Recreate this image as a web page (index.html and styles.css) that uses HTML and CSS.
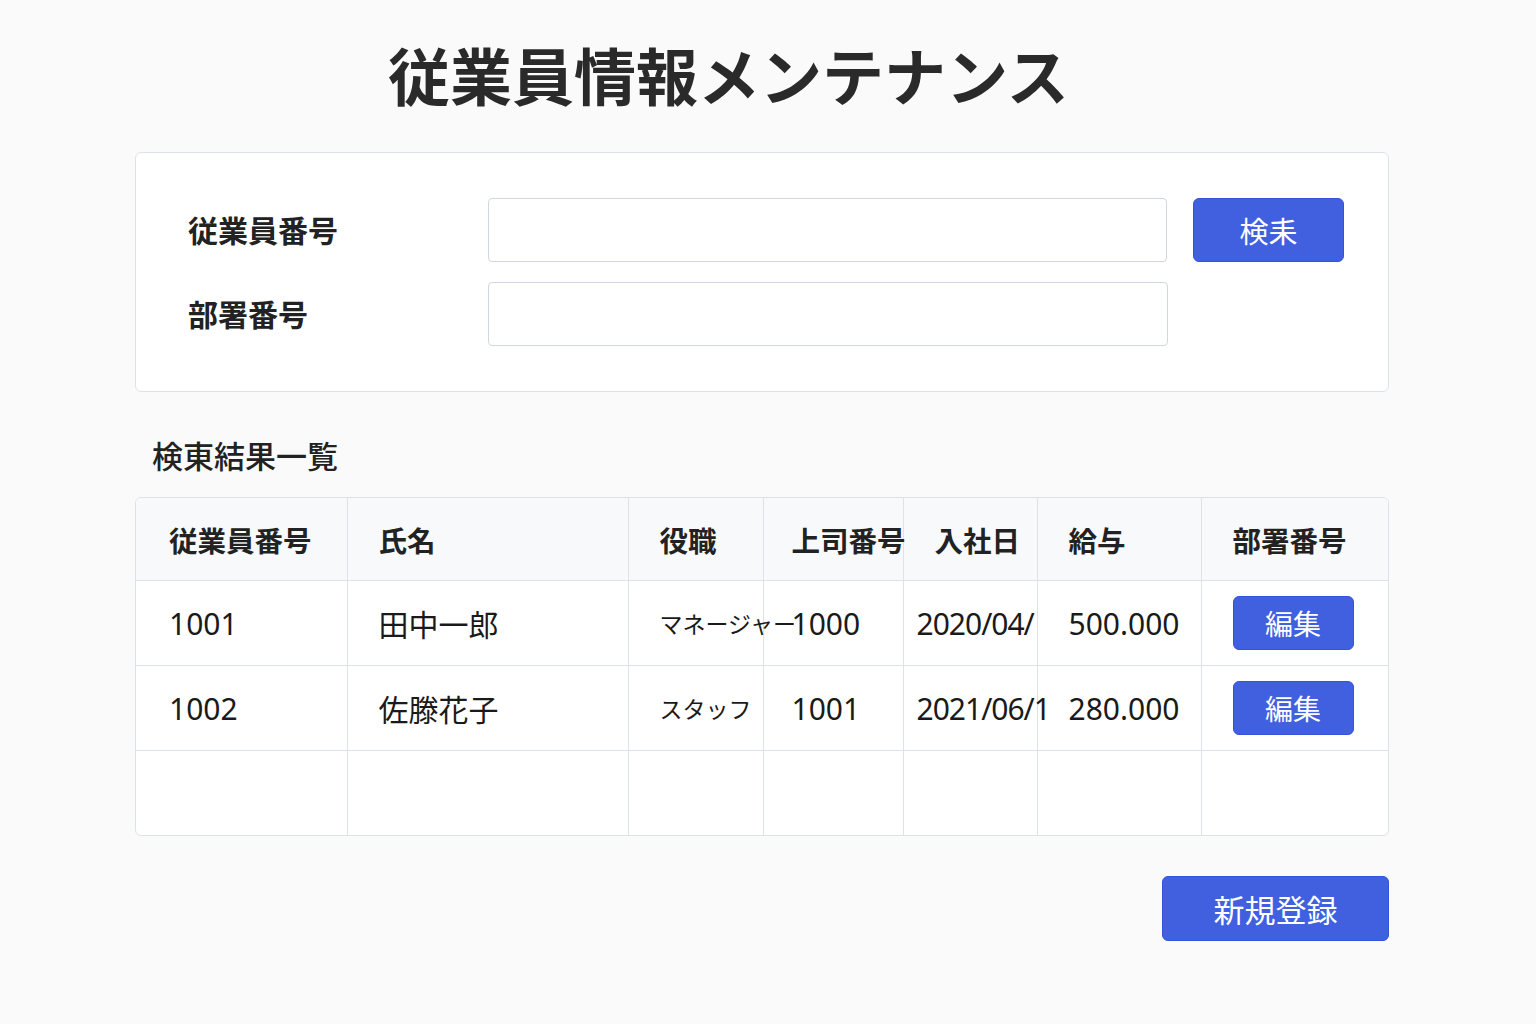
FILE: index.html
```html
<!DOCTYPE html>
<html lang="ja">

<head>
  <meta charset="UTF-8">
  <meta name="viewport" content="width=device-width, initial-scale=1.0">
  <title>従業員情報メンテナンス</title>
  <link rel="stylesheet" href="styles.css">
</head>

<body>
  <div class="container">
    <h1>従業員情報メンテナンス</h1>

    <div class="search-panel">
      <div class="search-row">
        <label for="empNo">従業員番号</label>
        <input type="text" id="empNo">
        <button class="btn search-btn">検耒</button>
      </div>
      <div class="search-row">
        <label for="deptNo">部署番号</label>
        <input type="text" id="deptNo">
      </div>
    </div>

    <h2>検東結果一覧</h2>

    <div class="table-wrap">
      <table class="result-table">
        <colgroup>
          <col style="width: 211px">
          <col style="width: 281px">
          <col style="width: 135px">
          <col style="width: 140px">
          <col style="width: 134px">
          <col style="width: 164px">
          <col>
        </colgroup>
        <thead>
          <tr>
            <th>従業員番号</th>
            <th>氏名</th>
            <th>役職</th>
            <th class="boss">上司番号</th>
            <th>入社日</th>
            <th>給与</th>
            <th>部署番号</th>
          </tr>
        </thead>
        <tbody>
          <tr>
            <td>1001</td>
            <td>田中一郎</td>
            <td class="role">マネージャー</td>
            <td class="boss">1000</td>
            <td class="date">2020/04/</td>
            <td>500.000</td>
            <td><button class="btn edit-btn">編集</button></td>
          </tr>
          <tr>
            <td>1002</td>
            <td>佐滕花子</td>
            <td class="role">スタッフ</td>
            <td class="boss">1001</td>
            <td class="date">2021/06/1</td>
            <td>280.000</td>
            <td><button class="btn edit-btn">編集</button></td>
          </tr>
          <tr class="empty">
            <td></td>
            <td></td>
            <td></td>
            <td></td>
            <td></td>
            <td></td>
            <td></td>
          </tr>
        </tbody>
      </table>
    </div>

    <div class="actions">
      <button class="btn new-btn">新規登録</button>
    </div>
  </div>
</body>

</html>
```

FILE: styles.css
```css
body {
  margin: 0;
  font-family: "Noto Sans", "Noto Sans CJK JP", sans-serif;
  background-color: #fafafa;
  color: #1c1c1c;
}

.container {
  width: 1254px;
  margin: 0 0 0 135px;
  padding-top: 34px;
}

h1 {
  margin: 0 0 38px 253px;
  font-family: "Noto Sans CJK JP", sans-serif;
  font-size: 62px;
  line-height: 80px;
  font-weight: 700;
  color: #2a2a2a;
}

.search-panel {
  background-color: #fff;
  border: 1px solid #dde2e8;
  border-radius: 6px;
  padding: 45px 44px 45px 52px;
  display: flex;
  flex-direction: column;
  gap: 20px;
}

.search-row {
  display: flex;
  align-items: center;
}

.search-row label {
  width: 300px;
  font-family: "Noto Sans CJK JP", sans-serif;
  font-size: 30px;
  font-weight: 700;
  color: #222;
  margin-top: -3px;
}

.search-row input {
  width: 680px;
  height: 64px;
  box-sizing: border-box;
  border: 1px solid #cfd6e0;
  border-radius: 4px;
  background: #fff;
}

.btn {
  background-color: #4060e0;
  border: 1px solid #3553d6;
  color: #fff;
  border-radius: 6px;
  font-family: "Noto Sans CJK JP", sans-serif;
  cursor: pointer;
  padding: 0;
}

.search-btn {
  width: 151px;
  height: 64px;
  margin-left: 26px;
  font-size: 29px;
}

h2 {
  margin: 43px 0 22px 17px;
  font-family: "Noto Sans CJK JP", sans-serif;
  font-size: 31px;
  line-height: 40px;
  font-weight: 500;
  color: #222;
}

.table-wrap {
  background-color: #fff;
  border: 1px solid #dde2e8;
  border-radius: 6px;
  overflow: hidden;
}

.result-table {
  width: 100%;
  border-collapse: collapse;
  table-layout: fixed;
}

.result-table th,
.result-table td {
  border-right: 1px solid #dde2e8;
  border-bottom: 1px solid #dde2e8;
  text-align: left;
  white-space: nowrap;
  padding: 0 0 0 31px;
}

.result-table th:last-child,
.result-table td:last-child {
  border-right: none;
}

.result-table tbody tr:last-child td {
  border-bottom: none;
}

.result-table th {
  height: 82px;
  background-color: #f8f9fa;
  font-family: "Noto Sans CJK JP", sans-serif;
  font-size: 28.5px;
  font-weight: 700;
  color: #222;
}

.result-table th:first-child,
.result-table td:first-child {
  padding-left: 33px;
}

.result-table td {
  height: 84px;
  font-size: 30px;
  color: #1a1a1a;
}

.result-table th.boss,
.result-table td.boss {
  padding-left: 28px;
}

.result-table td.role {
  font-size: 23px;
  overflow: visible;
}

.result-table td.date {
  padding-left: 13px;
  letter-spacing: -1px;
}

.edit-btn {
  width: 121px;
  height: 54px;
  font-size: 28px;
  display: block;
}

.actions {
  display: flex;
  justify-content: flex-end;
  margin-top: 40px;
}

.new-btn {
  width: 227px;
  height: 65px;
  font-size: 31px;
}
```
